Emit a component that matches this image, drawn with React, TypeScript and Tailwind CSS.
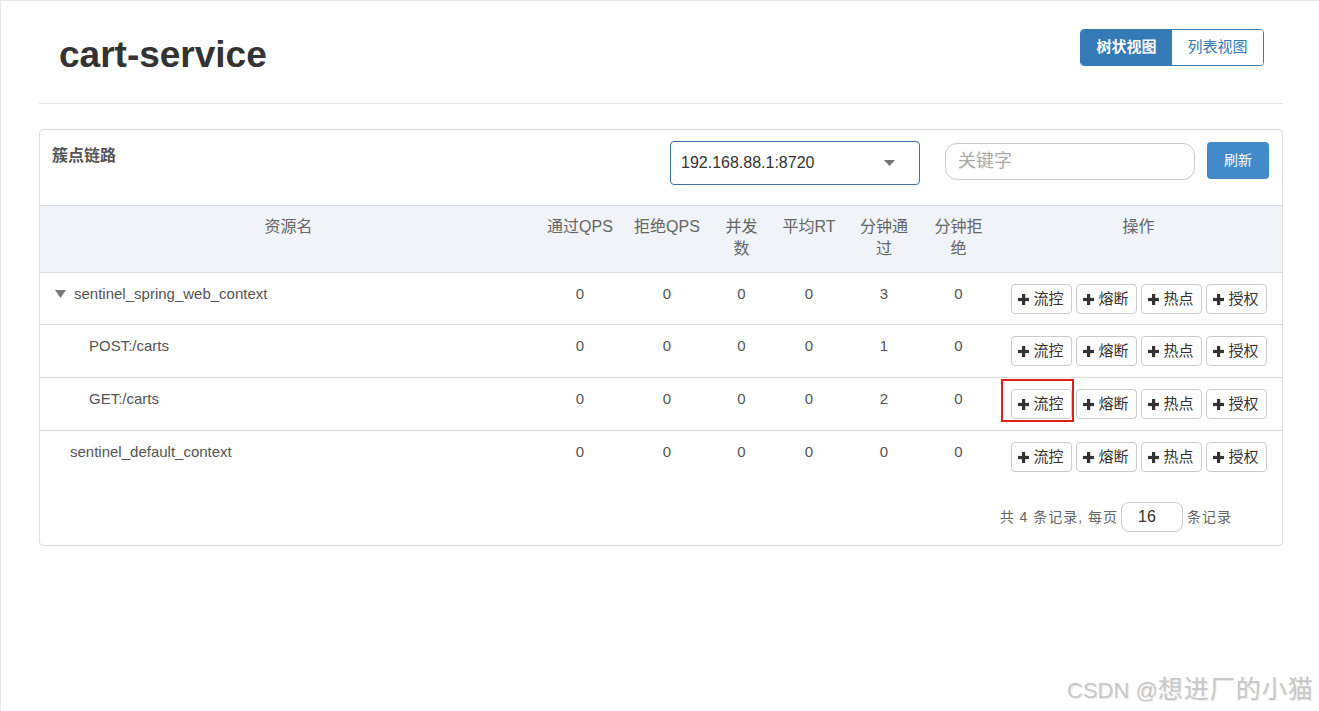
import React from 'react'

const font = { fontFamily: '"Liberation Sans", Arial, "Noto Sans CJK SC", sans-serif' }

interface Row {
  name: string
  indent: 'root' | 'child' | 'plain'
  pass: number
  block: number
  thread: number
  rt: number
  minPass: number
  minBlock: number
  marked?: boolean
}

const rows: Row[] = [
  { name: 'sentinel_spring_web_context', indent: 'root', pass: 0, block: 0, thread: 0, rt: 0, minPass: 3, minBlock: 0 },
  { name: 'POST:/carts', indent: 'child', pass: 0, block: 0, thread: 0, rt: 0, minPass: 1, minBlock: 0 },
  { name: 'GET:/carts', indent: 'child', pass: 0, block: 0, thread: 0, rt: 0, minPass: 2, minBlock: 0, marked: true },
  { name: 'sentinel_default_context', indent: 'plain', pass: 0, block: 0, thread: 0, rt: 0, minPass: 0, minBlock: 0 },
]

function Plus() {
  return (
    <svg width="11" height="11" viewBox="0 0 11 11" className="shrink-0">
      <rect x="4" y="0" width="3.2" height="11" fill="#333" />
      <rect x="0" y="3.9" width="11" height="3.2" fill="#333" />
    </svg>
  )
}

function ActionButton({ label, marked }: { label: string; marked?: boolean }) {
  return (
    <div className="relative">
      <button className="flex h-[30px] w-[61px] items-center justify-center gap-[4px] rounded-[4px] border border-[#ccc] bg-white text-[15px] text-[#333]">
        <Plus />
        <span>{label}</span>
      </button>
      {marked && (
        <span className="pointer-events-none absolute -left-[10px] -top-[10px] -right-[2px] -bottom-[3px] border-2 border-[#e0201c]" />
      )}
    </div>
  )
}

export default function App() {
  return (
    <div className="relative min-h-[711px] w-[1319px] border-t border-l border-[#e8e8e8] bg-white" style={font}>
      <div className="ml-[38px] w-[1244px]">
        {/* Title */}
        <div className="flex h-[103px] items-start justify-between border-b border-[#e5e5e5] pl-[20px] pr-[19px] pt-[28px]">
          <h1 className="mt-[6px] text-[37px] font-bold leading-[1.1] text-[#333]">cart-service</h1>
          <div className="flex h-[37px] overflow-hidden rounded-[4px] border border-[#337ab7] text-[15px]">
            <button className="w-[91px] bg-[#337ab7] font-bold text-white">树状视图</button>
            <button className="w-[91px] bg-white text-[#337ab7]">列表视图</button>
          </div>
        </div>

        {/* Panel */}
        <div className="mt-[25px] rounded-[4px] border border-[#ddd]">
          <div className="flex h-[75px] items-start pl-[12px] pr-[13px] pt-[11px]">
            <div className="mt-[5px] text-[16px] font-bold leading-[20px] text-[#555]">簇点链路</div>
            <div className="flex-1" />
            <div className="flex h-[44px] w-[250px] items-center justify-between rounded-[4px] border border-[#3a76ad] pl-[10px] pr-[24px] text-[16px] text-[#333]">
              <span>192.168.88.1:8720</span>
              <svg width="11" height="6" viewBox="0 0 11 6">
                <polygon points="0,0 11,0 5.5,6" fill="#777" />
              </svg>
            </div>
            <div className="ml-[25px] mt-[2px] flex h-[37px] w-[250px] items-center rounded-[12px] border border-[#ccc] pl-[12px] text-[18px] text-[#aaa]">
              关键字
            </div>
            <button className="ml-[12px] mt-[1px] h-[37px] w-[62px] rounded-[4px] bg-[#428bca] text-[14px] text-white">刷新</button>
          </div>

          <table className="w-full table-fixed border-collapse">
            <colgroup>
              <col className="w-[497px]" />
              <col className="w-[86px]" />
              <col className="w-[88px]" />
              <col className="w-[61px]" />
              <col className="w-[74px]" />
              <col className="w-[76px]" />
              <col className="w-[73px]" />
              <col />
            </colgroup>
            <thead>
              <tr className="border-y border-[#ddd] bg-[#f0f3f7] text-[16px] text-[#666]">
                <th className="h-[67px] px-[8px] pb-[11px] pt-[10px] align-top font-normal leading-[22px]">资源名</th>
                <th className="px-[2px] pt-[10px] align-top font-normal leading-[22px]">通过QPS</th>
                <th className="px-[2px] pt-[10px] align-top font-normal leading-[22px]">拒绝QPS</th>
                <th className="px-[2px] pt-[10px] align-top font-normal leading-[22px]">并发<br />数</th>
                <th className="px-[2px] pt-[10px] align-top font-normal leading-[22px]">平均RT</th>
                <th className="px-[2px] pt-[10px] align-top font-normal leading-[22px]">分钟通<br />过</th>
                <th className="px-[2px] pt-[10px] align-top font-normal leading-[22px]">分钟拒<br />绝</th>
                <th className="px-[2px] pt-[10px] align-top font-normal leading-[22px]">操作</th>
              </tr>
            </thead>
            <tbody>
              {rows.map((r, i) => {
                const pad = i === 0 ? 'pt-[11px] pb-[10px]' : 'py-[11px]'
                return (
                  <tr key={r.name} className={i < rows.length - 1 ? 'border-b border-[#ddd]' : ''}>
                    <td className={`${pad} align-top text-[15px] leading-[20px] text-[#555]`}>
                      {r.indent === 'root' && (
                        <div className="flex items-center pl-[15px]">
                          <svg width="11" height="8" viewBox="0 0 11 8" className="mr-[8px]">
                            <polygon points="0,0 11,0 5.5,8" fill="#777" />
                          </svg>
                          {r.name}
                        </div>
                      )}
                      {r.indent === 'child' && <div className="pl-[49px]">{r.name}</div>}
                      {r.indent === 'plain' && <div className="pl-[30px]">{r.name}</div>}
                    </td>
                    {[r.pass, r.block, r.thread, r.rt, r.minPass, r.minBlock].map((v, j) => (
                      <td key={j} className={`${pad} text-center align-top text-[15px] leading-[20px] text-[#555]`}>
                        {v}
                      </td>
                    ))}
                    <td className={`${pad} align-top`}>
                      <div className="flex justify-center gap-[4px]">
                        <ActionButton label="流控" marked={r.marked} />
                        <ActionButton label="熔断" />
                        <ActionButton label="热点" />
                        <ActionButton label="授权" />
                      </div>
                    </td>
                  </tr>
                )
              })}
            </tbody>
          </table>

          <div className="flex items-center justify-end pb-[13px] pr-[50px] pt-[19px] text-[14px] tracking-[1px] text-[#666]">
            <span>共 4 条记录, 每页</span>
            <div className="ml-[3px] mr-[4px] flex h-[30px] w-[62px] items-center rounded-[8px] border border-[#ccc] pl-[16px] text-[16px] tracking-normal text-[#333]">
              16
            </div>
            <span>条记录</span>
          </div>
        </div>
      </div>

      {/* Watermark */}
      <div
        className="absolute left-[1066px] top-[672px] text-[22px] leading-[32px] text-[#c8c8c8]"
        style={{ textShadow: '1px 1px 1px #e6e6e6' }}
      >
        CSDN @<span className="text-[25px] tracking-[1px]">想进厂的小猫</span>
      </div>
    </div>
  )
}
